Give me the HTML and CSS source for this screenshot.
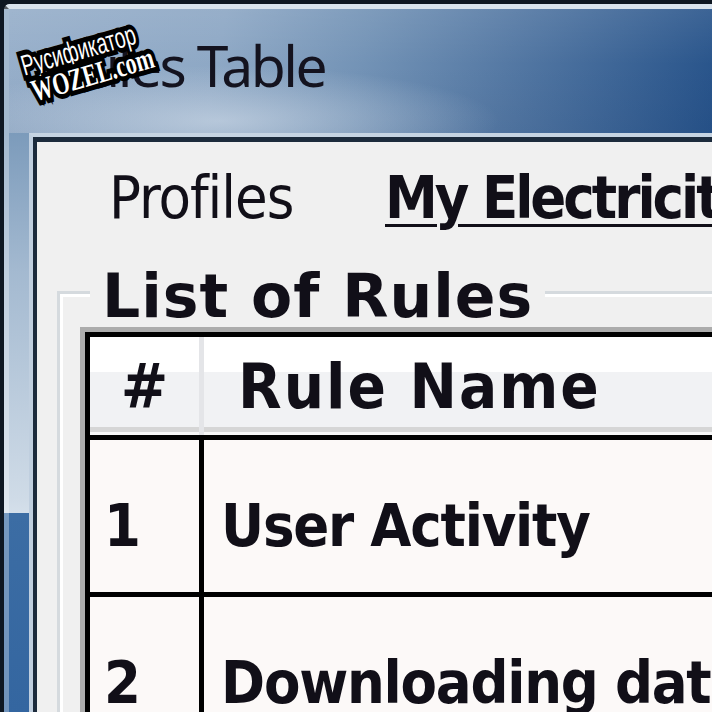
FILE: index.html
```html
<!DOCTYPE html>
<html lang="en">
<head>
<meta charset="utf-8">
<title>Rules Table</title>
<link rel="stylesheet" href="styles.css">
</head>
<body>
<div class="window">
  <div class="glass">
    <div class="titlebar"><span class="title">Rules Table</span></div>
    <div class="client-edge">
      <div class="client">
        <nav class="menu">
          <span class="menu-item profiles">Profiles</span>
          <span class="menu-item current">My Electricity</span>
        </nav>
        <fieldset class="group">
          <legend class="group-title">List of Rules</legend>
          <div class="grid-frame">
            <table class="rules">
              <thead>
                <tr><th class="col-num">#</th><th class="col-name">Rule Name</th></tr>
              </thead>
              <tbody>
                <tr><td class="col-num">1</td><td class="col-name">User Activity</td></tr>
                <tr><td class="col-num">2</td><td class="col-name">Downloading data</td></tr>
              </tbody>
            </table>
          </div>
        </fieldset>
      </div>
    </div>
  </div>
</div>
<div class="stamp">
  <span class="stamp-top">Русификатор</span>
  <span class="stamp-bottom">WOZEL.com</span>
</div>
</body>
</html>
```

FILE: styles.css
```css
html, body {
  margin: 0;
  height: 100%;
  overflow: hidden;
  background: #0d1722;
}

/* window frame */
.window {
  width: 712px;
  height: 712px;
  box-sizing: border-box;
  border-top: 4px solid #0e1722;
  border-left: 4px solid #0e1722;
  border-top-left-radius: 9px;
  overflow: hidden;
}

.glass {
  height: 100%;
  box-sizing: border-box;
  border-top: 5px solid #d9e3ed;
  border-left: 5px solid rgba(255, 255, 255, 0.3);
  border-top-left-radius: 5px;
  display: flex;
  flex-direction: column;
  background:
    radial-gradient(ellipse 280px 55px at 210px 112px, rgba(208, 220, 233, 0.65), rgba(208, 220, 233, 0)) 0 0 / 100% 124px no-repeat,
    linear-gradient(to bottom, rgba(255, 255, 255, 0.08), rgba(255, 255, 255, 0) 45%, rgba(0, 20, 60, 0.05)) 0 0 / 100% 124px no-repeat,
    linear-gradient(100deg, #97afca 0%, #8ea8c5 30%, #7393b6 50%, #5579a4 70%, #27538a 100%) 0 0 / 100% 124px no-repeat,
    linear-gradient(to bottom, #7c9bbb 124px, #a3b9d0 260px, #cfdbe7 490px, #d4dfea 504px, #3c6da4 504px, #3466a0 100%);
}

.titlebar {
  flex: none;
  height: 124px;
  box-sizing: border-box;
  padding: 28px 0 0 43px;
  white-space: nowrap;
}

.title {
  display: block;
  font-family: "Noto Sans", "Open Sans", sans-serif;
  font-size: 57px;
  line-height: 57px;
  letter-spacing: -2.5px;
  color: #14131f;
}

.client-edge {
  flex: 1;
  display: flex;
  margin-left: 20px;
  border-top: 4px solid #c6d4e2;
  border-left: 4px solid #c0cfdf;
  min-height: 0;
}

.client {
  flex: 1;
  min-width: 0;
  border-top: 5px solid #1c2b3c;
  border-left: 4px solid #1c2b3c;
  background: #f0f0f0;
  overflow: hidden;
  color: #110f18;
  font-family: "DejaVu Sans Condensed", "DejaVu Sans", sans-serif;
}

/* menu strip */
.menu {
  display: flex;
  padding: 26px 0 0 72px;
  font-size: 59px;
  line-height: 59px;
  white-space: nowrap;
}

.profiles {
  flex: none;
  width: 276px;
  letter-spacing: -1px;
}

.current {
  font-weight: bold;
  letter-spacing: -3px;
  text-decoration: underline;
  text-decoration-thickness: 3px;
  text-underline-offset: 6px;
}

/* group box */
.group {
  margin: 32px 0 0 20px;
  padding: 1px 0 0 20px;
  border: 0;
  border-top: 3px solid #d5dade;
  border-left: 3px solid #d5dade;
  box-shadow: inset 3px 3px 0 #ffffff;
  min-width: 0;
}

.group-title {
  margin-left: 10px;
  padding: 7px 12px 0 12px;
  font-family: "DejaVu Sans", sans-serif;
  font-weight: bold;
  font-size: 60px;
  line-height: 60px;
  letter-spacing: 1px;
  background: #f0f0f0;
  white-space: nowrap;
}

/* rules grid */
.grid-frame {
  border-top: 5px solid #acacac;
  border-left: 5px solid #acacac;
}

.rules {
  border-collapse: separate;
  border-spacing: 0;
  border-top: 5px solid #000;
  border-left: 5px solid #000;
  width: 900px;
  white-space: nowrap;
}

.rules th,
.rules td {
  box-sizing: border-box;
  vertical-align: top;
  font-weight: bold;
  text-align: left;
}

.rules th {
  padding: 18px 0 17px 34px;
  font-size: 63px;
  line-height: 63px;
  letter-spacing: 2px;
  background: linear-gradient(to bottom, #ffffff 0 35px, #f1f2f4 35px 90px, #d6d6d6 90px 95px, #f7f7f7 95px);
}

.rules th.col-num {
  width: 114px;
  padding-left: 0;
  letter-spacing: 0;
  text-align: center;
  border-right: 5px solid #e4e5e8;
}

.rules td {
  padding: 56px 0 37px 17px;
  font-size: 59px;
  line-height: 59px;
  letter-spacing: -1.2px;
  border-top: 5px solid #000;
  background: #fcf9f8;
}

.rules td.col-num {
  padding-left: 14px;
  letter-spacing: 0;
  border-right: 5px solid #000;
}

/* translator stamp over the caption */
.stamp-top,
.stamp-bottom {
  position: absolute;
  color: #ffffff;
  -webkit-text-stroke: 10px #000;
  paint-order: stroke fill;
  transform-origin: 0 50%;
  white-space: nowrap;
}

.stamp-top {
  left: 22px;
  top: 50px;
  font-family: "Liberation Sans", sans-serif;
  font-size: 29px;
  transform: rotate(-16deg) scaleX(0.66);
}

.stamp-bottom {
  left: 32px;
  top: 74px;
  font-family: "Liberation Serif", serif;
  font-weight: bold;
  font-size: 31px;
  transform: rotate(-16deg) scaleX(0.7);
}
```
